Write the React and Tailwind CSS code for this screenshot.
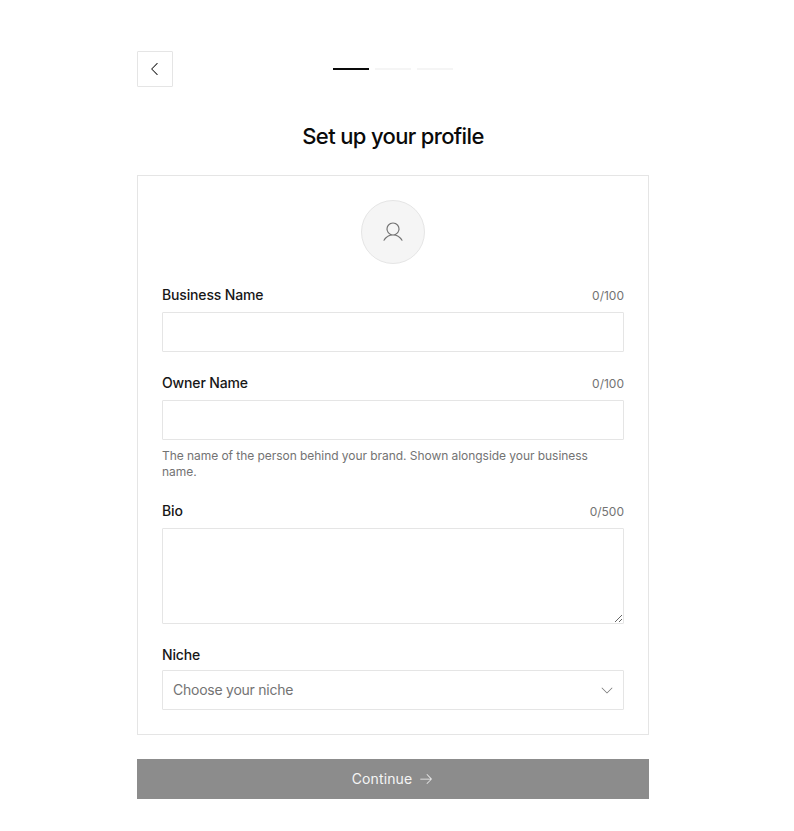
import { PiArrowRightLight, PiCaretDownLight, PiCaretLeftLight, PiUserLight } from "react-icons/pi";

function FieldLabel({ label, count }) {
  return (
    <div className="mb-2 flex h-[17px] items-start justify-between">
      <label className="text-sm font-medium leading-[15px] tracking-[-0.15px] text-[#171717]">{label}</label>
      {count ? <span className="text-xs leading-[17px] text-[#737373]">{count}</span> : null}
    </div>
  );
}

export default function App() {
  return (
    <div className="min-h-[831px] bg-white pr-2 pt-[51px] font-['Inter',sans-serif] text-[#0a0a0a]">
      <div className="mx-auto w-[512px]">
        <div className="flex items-center justify-between">
          <button className="flex h-9 w-9 items-center justify-center rounded-[1px] border border-[#e5e5e5] bg-white">
            <PiCaretLeftLight className="h-[18px] w-[18px] text-[#171717]" />
          </button>
          <div className="flex gap-1.5">
            <div className="h-0.5 w-9 bg-[#0a0a0a]" />
            <div className="h-0.5 w-9 bg-[#f5f5f5]" />
            <div className="h-0.5 w-9 bg-[#f5f5f5]" />
          </div>
          <div className="w-9" />
        </div>

        <h1 className="mt-[33px] text-center text-[22px] font-medium leading-8 tracking-[-0.65px]">Set up your profile</h1>

        <div className="mt-[23px] border border-[#e5e5e5] p-6">
          <div className="flex justify-center">
            <div className="flex h-16 w-16 items-center justify-center rounded-full border border-[#e5e5e5] bg-[#f5f5f5]">
              <PiUserLight className="h-6 w-6 text-[#737373]" />
            </div>
          </div>

          <div className="mt-[23px]">
            <FieldLabel label="Business Name" count="0/100" />
            <input className="block h-10 w-full rounded-[1px] border border-[#e5e5e5] bg-white px-2.5 text-sm outline-none" />
          </div>

          <div className="mt-[23px]">
            <FieldLabel label="Owner Name" count="0/100" />
            <input className="block h-10 w-full rounded-[1px] border border-[#e5e5e5] bg-white px-2.5 text-sm outline-none" />
            <p className="mt-2 text-xs leading-4 tracking-[-0.05px] text-[#737373]">
              The name of the person behind your brand. Shown alongside your business name.
            </p>
          </div>

          <div className="mt-[23px]">
            <FieldLabel label="Bio" count="0/500" />
            <textarea className="block h-24 w-full rounded-[1px] border border-[#e5e5e5] bg-white px-2.5 py-2 text-sm outline-none" />
          </div>

          <div className="mt-[23px]">
            <div className="mb-1.5 flex h-[17px] items-start">
              <label className="text-sm font-medium leading-[15px] tracking-[-0.15px] text-[#171717]">Niche</label>
            </div>
            <button className="flex h-10 w-full items-center justify-between rounded-[1px] border border-[#e5e5e5] bg-white pl-2.5 pr-2 text-sm tracking-[-0.25px] text-[#737373]">
              <span>Choose your niche</span>
              <PiCaretDownLight className="h-4 w-4 text-[#737373]" />
            </button>
          </div>
        </div>

        <button className="mt-6 flex h-10 w-full items-center justify-center gap-1.5 bg-[#8c8c8c] text-sm font-normal tracking-[0.1px] text-[#f5f5f5]">
          Continue
          <PiArrowRightLight className="h-4 w-4" />
        </button>
      </div>
    </div>
  );
}
